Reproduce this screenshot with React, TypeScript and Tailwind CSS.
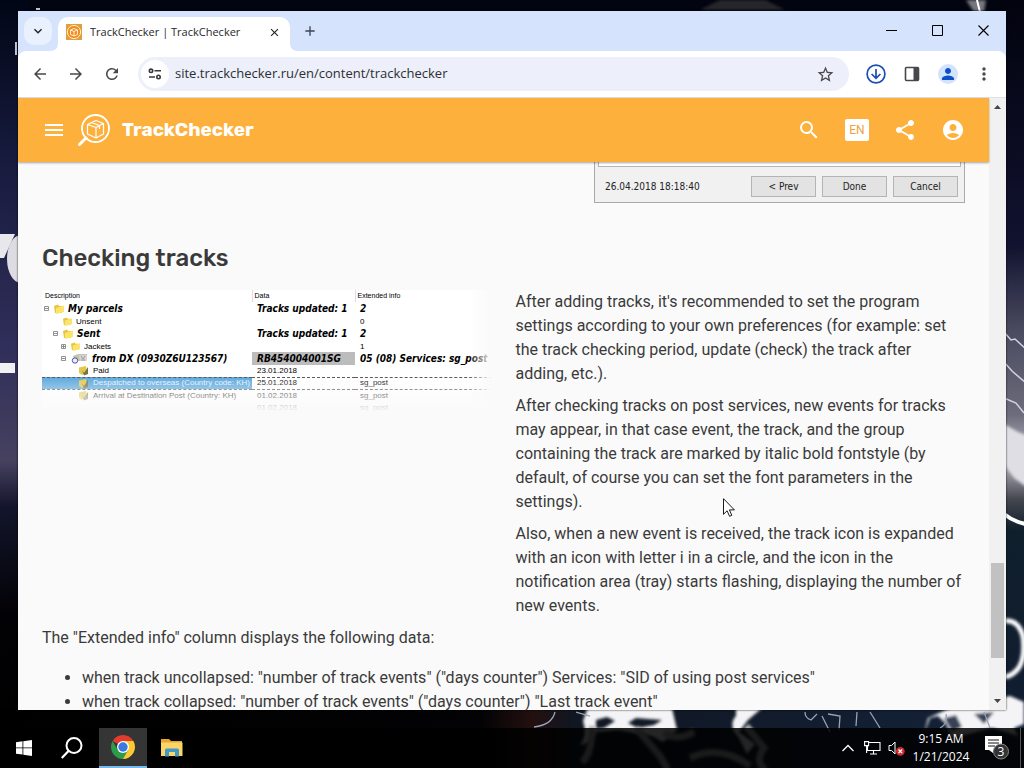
import React from "react";
import {
  MdAccountCircle,
  MdArrowBack,
  MdArrowForward,
  MdMenu,
  MdMoreVert,
  MdPerson,
  MdRefresh,
  MdSearch,
  MdShare,
  MdStarBorder,
  MdClose,
  MdAdd,
  MdExpandMore,
} from "react-icons/md";

function Wallpaper() {
  return (
    <svg
      aria-hidden="true"
      className="absolute inset-0 h-full w-full"
      viewBox="0 0 1024 768"
      preserveAspectRatio="none"
    >
      <defs>
        <linearGradient id="left" x1="0" y1="0" x2="0" y2="1">
          <stop offset="0" stopColor="#010616" />
          <stop offset="0.2" stopColor="#161a3c" />
          <stop offset="0.45" stopColor="#302e5a" />
          <stop offset="0.6" stopColor="#46415f" />
          <stop offset="0.66" stopColor="#13152c" />
          <stop offset="0.8" stopColor="#020205" />
          <stop offset="1" stopColor="#000000" />
        </linearGradient>
        <linearGradient id="right" x1="0" y1="0" x2="0" y2="1">
          <stop offset="0" stopColor="#02030e" />
          <stop offset="0.32" stopColor="#11122f" />
          <stop offset="0.43" stopColor="#4a4b60" />
          <stop offset="0.54" stopColor="#6d6c7c" />
          <stop offset="0.6" stopColor="#bdbdc8" />
          <stop offset="0.65" stopColor="#44474f" />
          <stop offset="0.69" stopColor="#101f2c" />
          <stop offset="0.95" stopColor="#101d31" />
          <stop offset="1" stopColor="#0a1322" />
        </linearGradient>
        <linearGradient id="foot" x1="0" y1="0" x2="1" y2="0">
          <stop offset="0" stopColor="#000000" />
          <stop offset="0.47" stopColor="#030305" />
          <stop offset="0.52" stopColor="#23100f" />
          <stop offset="0.56" stopColor="#101622" />
          <stop offset="1" stopColor="#14233a" />
        </linearGradient>
        <filter id="glow" filterUnits="userSpaceOnUse" x="0" y="0" width="1060" height="800">
          <feGaussianBlur stdDeviation="1.500" />
        </filter>
      </defs>
      <rect width="1024" height="768" fill="#02040f" />
      <rect width="30" height="768" fill="url(#left)" />
      <rect x="1000" width="24" height="768" fill="url(#right)" />
      <rect y="708" width="1024" height="60" fill="url(#foot)" />
      <path d="M700 10l20-10h45l20 10z" fill="#28252a" filter="url(#glow)" />
      <path d="M966 0h20l-2 12h-10z" fill="#77777f" filter="url(#glow)" />
      <path d="M977 0l3 12" stroke="#fff" strokeWidth="2" />
      <path d="M36 8h4v2h-4zM15 42h2v13h-2z" fill="#c5c7d0" />
      <path d="M0 234h15l-11 24H0z" fill="#e8e8ec" />
      <ellipse cx="21" cy="259" rx="14" ry="24" fill="#dcdce2" />
      <rect x="0" y="363" width="15" height="10" fill="#f0eff2" />
      <g fill="none" stroke="#fff">
        <path d="M1004 332l7 8 4-1 11 10M1004 362l8 9 14 12M1004 398l12 5 8 10" stroke="#cfd2e0" strokeWidth="1.500" />
        <path d="M1004 424l14 8 10 4v52l-14-10-10-14z" fill="#dedee4" stroke="none" filter="url(#glow)" />
        <path d="M1004 514q10 8 22 10" strokeWidth="4" />
        <path d="M1004 621q14-2 19 15 3 24-6 34-8 8-13 6" strokeWidth="5" filter="url(#glow)" />
      </g>
      <g filter="url(#glow)">
        <path
          fillRule="evenodd"
          fill="#f4f4f6"
          d="M589 704h82l6 26-14 12-11-6-34-6-22 2q-5 12-16 13 8-10 3-24zM596 720v9l8-1 11-7-8-4zM628 723l10 5 16-3 8-5-14-1-12-1z"
        />
        <path d="M736 708h26l-14 12-9 12 16 12-8 10-8-16-6-8q-2-10 3-14z" fill="#f4f4f6" />
        <path d="M924 734l4-16 22-10 60-12 14 6v22l-10 4 4 8-12-4-14-4-40 10-6-14-8-8-8 2z" fill="#f4f4f6" />
        <path d="M944 718l12-3 6 12-10 5z" fill="#384357" />
        <path d="M974 714l20-2-10 12z" fill="#384357" />
      </g>
      <path d="M534 727q18-2 21-15M590 716l-14-4M805 712q0 6 6 8l6-6M822 716l8 16M828 714l12 2-1 14M857 712l-1 14M870 712l10 16M940 728q8-4 6-14M984 712l6 16" stroke="#98a4b6" strokeWidth="1.300" fill="none" />
      <path d="M592 726q0 28-10 36M636 728l24 28 8 14M664 732q12 10 30 0M746 726l18 22q-10 14 2 22M690 758q30-14 60 8" stroke="#b0b0b0" strokeWidth="7" fill="none" filter="url(#glow)" />
    </svg>
  );
}

function BoxLens({ className }: { className: string }) {
  return (
    <svg aria-hidden="true" viewBox="0 0 34 34" className={className} fill="none" stroke="currentColor" strokeLinejoin="round">
      <circle cx="17.500" cy="15.500" r="13.500" strokeWidth="1.800" />
      <path d="M8 25l-6.500 6.500" strokeWidth="3" strokeLinecap="round" />
      <path d="M9.500 11.500l8.500-4 7.500 3v10.500l-7.500 4-8.500-4zM9.500 11.500l8.500 3 7.500-4M18 14.500V25M13.500 9.500l8 3v3.500" strokeWidth="1.200" />
    </svg>
  );
}

function Favicon() {
  return (
    <svg aria-hidden="true" viewBox="0 0 16 16" className="size-4">
      <rect width="16" height="16" fill="#dfa03c" />
      <circle cx="8" cy="8" r="6.600" fill="#f48b20" stroke="#fff0d0" />
      <path d="M4.500 6L8 4.500 11.500 6v4.500L8 12l-3.500-1.500zM4.500 6L8 7.500 11.500 6M8 7.500V12" fill="none" stroke="#fff0d0" />
    </svg>
  );
}

function TabStrip() {
  return (
    <div className="flex h-10 shrink-0 items-end">
      <button aria-label="Search tabs" className="mb-[6px] ml-[6px] flex size-7 items-center justify-center rounded-[10px] bg-[#e9f1fe] text-[#1f2023]">
        <MdExpandMore className="size-4" stroke="currentColor" />
      </button>
      <div className="relative ml-[6px] flex h-[34px] w-[232px] items-center rounded-t-[10px] bg-white pr-2 pb-[4px] pl-2">
        <svg aria-hidden="true" viewBox="0 0 8 8" className="absolute bottom-0 -left-2 size-2 text-white">
          <path d="M8 0v8H0q8 0 8-8" fill="currentColor" />
        </svg>
        <svg aria-hidden="true" viewBox="0 0 8 8" className="absolute -right-2 bottom-0 size-2 text-white">
          <path d="M0 0v8h8Q0 8 0 0" fill="currentColor" />
        </svg>
        <Favicon />
        <span className="ml-2 flex-1 truncate text-[11px] text-[#27282c]">TrackChecker | TrackChecker</span>
        <button aria-label="Close tab" className="flex size-4 items-center justify-center text-[#1f2023]">
          <MdClose className="size-[13px]" stroke="currentColor" />
        </button>
      </div>
      <button aria-label="New tab" className="mb-3 ml-3 flex size-4 items-center justify-center text-[#3c4454]">
        <MdAdd className="size-4" />
      </button>
      <div className="ml-auto flex h-[38px] self-start text-black">
        <button aria-label="Minimize" className="flex w-[46px] items-center justify-center">
          <svg viewBox="0 0 11 11" className="size-[11px]"><path d="M0 5.500h11" stroke="currentColor" /></svg>
        </button>
        <button aria-label="Maximize" className="flex w-[46px] items-center justify-center">
          <svg viewBox="0 0 11 11" className="size-[11px]"><path d="M.5.5h10v10H.5z" fill="none" stroke="currentColor" /></svg>
        </button>
        <button aria-label="Close" className="flex w-[46px] items-center justify-center">
          <svg viewBox="0 0 11 11" className="size-[11px]"><path d="M.5.5l10 10M10.500.5l-10 10" stroke="currentColor" strokeWidth="1.100" /></svg>
        </button>
      </div>
    </div>
  );
}

const toolButton = "flex h-9 w-9 items-center justify-center";

function AddressBar() {
  return (
    <div className="flex h-[47px] shrink-0 items-center rounded-t-lg border-b border-[#dfe1e6] bg-white px-1 text-[#46484c]">
      <button aria-label="Back" className={toolButton}><MdArrowBack className="size-[18px]" /></button>
      <button aria-label="Forward" className={toolButton}><MdArrowForward className="size-[18px]" /></button>
      <button aria-label="Reload" className={toolButton}><MdRefresh className="size-[18px]" /></button>
      <div className="mr-[9px] ml-2 flex h-[34px] flex-1 items-center rounded-full bg-[#edf0fa] pr-[14px] pl-[3px]">
        <button aria-label="Site information" className="flex size-7 items-center justify-center rounded-full bg-white text-[#36383c]">
          <svg viewBox="0 0 14 12" className="h-3 w-[14px]" fill="none" stroke="currentColor" strokeWidth="1.600">
            <circle cx="3" cy="2.800" r="1.700" />
            <path d="M6.500 2.800H13M1 9h6" />
            <circle cx="10.500" cy="9" r="1.700" />
          </svg>
        </button>
        <input
          aria-label="Address"
          readOnly
          value="site.trackchecker.ru/en/content/trackchecker"
          className="ml-[6px] min-w-0 flex-1 bg-transparent text-[13px] text-[#2c2e33] outline-none"
        />
        <button aria-label="Bookmark this page"><MdStarBorder className="size-[19px]" /></button>
      </div>
      <button aria-label="Downloads" className={toolButton}>
        <svg viewBox="0 0 20 20" className="size-5 text-[#1b4fb0]" fill="none" stroke="currentColor" strokeWidth="1.700">
          <circle cx="10" cy="10" r="8.900" />
          <path d="M10 5v9.300M5.600 10l4.400 4.400L14.400 10" />
        </svg>
      </button>
      <button aria-label="Side panel" className={toolButton}>
        <svg viewBox="0 0 16 16" className="size-4"><rect x="1.500" y="1.500" width="13" height="13" rx="1" fill="none" stroke="currentColor" strokeWidth="1.600" /><path d="M9.500 2h5v12h-5z" fill="currentColor" /></svg>
      </button>
      <button aria-label="Profile" className={toolButton}>
        <span className="flex size-5 items-center justify-center rounded-full bg-[#d3e3fd] text-[#0b50c8]"><MdPerson className="size-[18px]" /></span>
      </button>
      <button aria-label="Menu" className={toolButton}><MdMoreVert className="size-5" /></button>
    </div>
  );
}

function SiteHeader() {
  return (
    <header className="z-10 flex h-16 shrink-0 items-center bg-[#fdb03c] px-6 font-['Roboto',sans-serif] text-white shadow-[0_1px_2px_rgba(0,0,0,0.35)]">
      <button aria-label="Open menu"><MdMenu className="size-6" /></button>
      <a href="#top" className="ml-3 flex items-center">
        <BoxLens className="size-[34px]" />
        <span className="ml-[10px] font-['Rubik','Inter',sans-serif] text-[19px] font-bold">TrackChecker</span>
      </a>
      <div className="ml-auto flex items-center gap-6">
        <button aria-label="Search"><MdSearch className="size-6" /></button>
        <button className="flex h-[22px] w-6 items-center justify-center rounded-[2px] bg-white text-[12px] text-[#f0a23c]">EN</button>
        <button aria-label="Share"><MdShare className="size-6" /></button>
        <button aria-label="Account"><MdAccountCircle className="size-6" /></button>
      </div>
    </header>
  );
}

const dialogButton = "h-[21px] w-[65px] border border-[#b4b4b4] bg-[#e3e3e3] text-[10px] leading-[19px]";

function AddTrackDialog() {
  return (
    <div className="ml-auto w-[371px] border border-t-0 border-[#a9a9a9] bg-[#f1f1f1] px-[3px] font-['DejaVu_Sans_Condensed','DejaVu_Sans',sans-serif] text-[#222]">
      <div className="h-[5px] border border-t-0 border-[#b5b5b5] bg-white" />
      <div className="flex items-center gap-[6px] pt-[9px] pr-[3px] pb-[5px] pl-[7px]">
        <span className="mr-auto text-[10px] leading-[19px]">26.04.2018 18:18:40</span>
        <button className={dialogButton}>&lt; Prev</button>
        <button className={dialogButton}>Done</button>
        <button className={dialogButton}>Cancel</button>
      </div>
    </div>
  );
}

function Folder({ small }: { small?: boolean }) {
  return (
    <svg aria-hidden="true" viewBox="0 0 10 10" className={small ? "size-[9px] shrink-0" : "size-[10px] shrink-0"}>
      <path d="M0 2l4-1.500 1 1.500h3v7H1z" fill="#e9c43c" />
      <path d="M2 4L10 1.500V8L2 10z" fill="#fbe46c" />
    </svg>
  );
}

function TrackIcon() {
  return (
    <svg aria-hidden="true" viewBox="0 0 17 11" className="h-[11px] w-[17px] shrink-0">
      <path d="M2 3l5-2h9v7H4z" fill="#c9c4a8" />
      <path d="M8 2h8v6H9z" fill="#d4d4d4" />
      <path d="M10 3l2 3 2-3M10 7h4" stroke="#888" fill="none" strokeWidth=".7" />
      <circle cx="4" cy="7.500" r="2.700" fill="#eef" stroke="#4a4fa8" />
    </svg>
  );
}

function EventIcon() {
  return (
    <svg aria-hidden="true" viewBox="0 0 11 11" className="size-[11px] shrink-0">
      <path d="M1 2.500L8 1l1 6-5 3-3-2z" fill="#e2c84b" />
      <path d="M4 5l2 3 4-6v7l-4 1.500z" fill="#77714b" />
    </svg>
  );
}

function Toggle({ sign }: { sign: string }) {
  return (
    <svg aria-hidden="true" viewBox="0 0 5 5" className="mr-[5px] size-[5px] shrink-0" fill="none" stroke="#777" strokeWidth=".8">
      <path d={sign === "+" ? "M.5.5h4v4h-4zM1 2.500h3M2.500 1v3" : "M.5.5h4v4h-4zM1 2.500h3"} />
    </svg>
  );
}

type Row = {
  label: string;
  indent: string;
  sign?: string;
  icon: React.ReactNode;
  data: string;
  info: string;
  bold?: boolean;
  marked?: boolean;
  selected?: boolean;
};

const rows: Row[] = [
  { label: "My parcels", indent: "pl-[2px]", sign: "-", icon: <Folder />, data: "Tracks updated: 1", info: "2", bold: true },
  { label: "Unsent", indent: "pl-[21px]", icon: <Folder small />, data: "", info: "0" },
  { label: "Sent", indent: "pl-[11px]", sign: "-", icon: <Folder />, data: "Tracks updated: 1", info: "2", bold: true },
  { label: "Jackets", indent: "pl-[19px]", sign: "+", icon: <Folder small />, data: "", info: "1" },
  { label: "from DX (0930Z6U123567)", indent: "pl-[19px]", sign: "-", icon: <TrackIcon />, data: "RB454004001SG", info: "05 (08) Services: sg_post", bold: true, marked: true },
  { label: "Paid", indent: "pl-9", icon: <EventIcon />, data: "23.01.2018", info: "" },
  { label: "Despatched to overseas (Country code: KH)", indent: "pl-9", icon: <EventIcon />, data: "25.01.2018", info: "sg_post", selected: true },
  { label: "Arrival at Destination Post (Country: KH)", indent: "pl-9", icon: <EventIcon />, data: "01.02.2018", info: "sg_post" },
  { label: "", indent: "pl-9", icon: null, data: "01.02.2018", info: "sg_post" },
];

function TracksPicture() {
  return (
    <div className="relative h-[126px] overflow-hidden bg-white font-['Liberation_Sans',sans-serif] text-black">
      <table className="w-full table-fixed border-collapse text-left whitespace-nowrap">
        <colgroup>
          <col className="w-[210px]" />
          <col className="w-[103px]" />
          <col />
        </colgroup>
        <thead>
          <tr className="h-[12px] text-[7px] leading-[12px]">
            <th className="p-0 pl-[3px] font-normal">Description</th>
            <th className="border-l border-[#ddd] p-0 pl-[2px] font-normal">Data</th>
            <th className="border-l border-[#ddd] p-0 pl-[2px] font-normal">Extended info</th>
          </tr>
        </thead>
        <tbody>
          {rows.map((r, i) => (
            <tr
              key={i}
              className={
                r.bold
                  ? "h-[13px] font-['DejaVu_Sans_Condensed','DejaVu_Sans',sans-serif] text-[10px] leading-[12px] font-bold italic"
                  : r.selected
                    ? "h-[12px] border-y border-dashed border-[#555] text-[8px] leading-[10px]"
                    : "h-[12px] text-[8px] leading-[11px]"
              }
            >
              <td className={r.selected ? "bg-[#5aa7dc] p-0 text-[#e2f2fc]" : "p-0"}>
                <div className={"flex items-center overflow-hidden " + r.indent}>
                  {r.sign && <Toggle sign={r.sign} />}
                  {r.icon}
                  <span className="ml-1">{r.label}</span>
                </div>
              </td>
              <td className={r.marked ? "bg-[#bcbcbc] p-0 pl-[5px]" : "p-0 pl-[5px]"}>{r.data}</td>
              <td className="p-0 pl-[5px]">{r.info}</td>
            </tr>
          ))}
        </tbody>
      </table>
      <div className="absolute inset-x-0 bottom-0 h-10 bg-linear-to-b from-transparent to-[#fafafa] to-90%" />
      <div className="absolute inset-y-0 right-0 w-6 bg-linear-to-r from-transparent to-[#fafafa]" />
    </div>
  );
}

function Article() {
  return (
    <main className="min-h-0 flex-1 overflow-hidden bg-[#fafafa] px-6 font-['Roboto',sans-serif] text-[16px] leading-6 text-[#3a3a3a]">
      <AddTrackDialog />
      <h2 className="mt-[39px] mb-4 font-['Rubik','Inter',sans-serif] text-[24px] leading-8 font-medium text-[#3a3a3a]">Checking tracks</h2>
      <div className="grid grid-cols-2 items-start gap-6">
        <TracksPicture />
        <div className="space-y-2">
          <p>After adding tracks, it's recommended to set the program settings according to your own preferences (for example: set the track checking period, update (check) the track after adding, etc.).</p>
          <p>After checking tracks on post services, new events for tracks may appear, in that case event, the track, and the group containing the track are marked by italic bold fontstyle (by default, of course you can set the font parameters in the settings).</p>
          <p>Also, when a new event is received, the track icon is expanded with an icon with letter i in a circle, and the icon in the notification area (tray) starts flashing, displaying the number of new events.</p>
        </div>
      </div>
      <p className="mt-2">The "Extended info" column displays the following data:</p>
      <ul className="mt-4 list-disc pl-10">
        <li>when track uncollapsed: "number of track events" ("days counter") Services: "SID of using post services"</li>
        <li>when track collapsed: "number of track events" ("days counter") "Last track event"</li>
      </ul>
    </main>
  );
}

function Scrollbar() {
  return (
    <div aria-hidden="true" className="flex w-[17px] shrink-0 flex-col items-center bg-[#f1f1f1]">
      <svg viewBox="0 0 17 17" className="size-[17px] shrink-0"><path d="M5 11l3.500-4 3.500 4z" fill="#444" /></svg>
      <div className="grow-[448]" />
      <div className="w-[13px] grow-[95] bg-[#c1c1c1]" />
      <div className="grow-[35]" />
      <svg viewBox="0 0 17 17" className="size-[17px] shrink-0"><path d="M5 6l3.500 4L12 6z" fill="#444" /></svg>
    </div>
  );
}

function Taskbar() {
  return (
    <footer className="relative flex h-10 shrink-0 items-stretch bg-black/85 text-white">
      <button aria-label="Start" className="flex w-12 items-center justify-center">
        <svg viewBox="0 0 16 16" className="size-4" fill="currentColor"><path d="M0 2.200l6.500-.9v6.200H0zM7.300 1.200L16 0v7.500H7.300zM0 8.300h6.500v6.300L0 13.700zM7.300 8.300H16V16l-8.700-1.300z" /></svg>
      </button>
      <button aria-label="Search" className="flex w-12 items-center justify-center">
        <svg viewBox="0 0 22 22" className="size-[22px]" fill="none" stroke="currentColor" strokeWidth="2"><circle cx="13" cy="8.500" r="7.500" /><path d="M7.500 14L.8 21" strokeWidth="2.200" /></svg>
      </button>
      <button aria-label="Chrome" className="ml-[3px] flex w-12 items-center justify-center border-b-2 border-[#76b9ed] bg-[#353535]">
        <svg viewBox="0 0 24 24" className="size-6">
          <path d="M12 12L1.608 6A12 12 0 0 1 22.392 6z" fill="#e33b2e" />
          <path d="M12 24A12 12 0 0 0 22.392 6H12v6z" fill="#fcc934" />
          <path d="M1.608 6A12 12 0 0 0 12 24l5.200-9H6.800z" fill="#2c9c4b" />
          <circle cx="12" cy="12" r="6" fill="#fff" />
          <circle cx="12" cy="12" r="4.700" fill="#3b78e0" />
        </svg>
      </button>
      <button aria-label="File Explorer" className="ml-px flex w-12 items-center justify-center">
        <svg viewBox="0 0 22 18" className="h-[18px] w-[22px]"><path d="M0 0h8l2 2h11v4H0z" fill="#e7a92f" /><path d="M0 3.500h21.500V17H0z" fill="#fbd667" /><path d="M4 17.500V11q0-1.500 1.500-1.500h11Q18 9.500 18 11v6.500h-4V13H8v4.500z" fill="#4498c8" /></svg>
      </button>
      <div className="ml-auto flex items-center">
        <button aria-label="Show hidden icons" className="flex w-6 justify-center">
          <svg viewBox="0 0 12 8" className="h-2 w-3" fill="none" stroke="currentColor" strokeWidth="1.300"><path d="M.5 7L6 1.500 11.500 7" /></svg>
        </button>
        <button aria-label="Network" className="flex w-6 justify-center">
          <svg viewBox="0 0 17 14" className="h-[14px] w-[17px]" fill="none" stroke="currentColor" strokeWidth="1.100"><path d="M5 1.500h11v8H3.500V5M.6.6h4v4h-4zM9.500 9.500V13M6 13h7M2.600 4.600V12" /></svg>
        </button>
        <button aria-label="Volume muted" className="flex w-6 justify-center">
          <svg viewBox="0 0 17 15" className="h-[15px] w-[17px]" fill="none"><path d="M1 4.500h2.500L7 1v12L3.500 9.500H1z" stroke="currentColor" /><circle cx="12.300" cy="10.300" r="4.400" fill="#cf2a2e" /><path d="M10.500 8.500l3.600 3.600m0-3.600l-3.600 3.600" stroke="#fff" strokeWidth="1.300" /></svg>
        </button>
        <div className="w-[66px] text-center text-[12px] leading-[18px]">
          <div>9:15 AM</div>
          <div>1/21/2024</div>
        </div>
        <button aria-label="3 notifications" className="flex w-[46px] justify-center">
          <svg viewBox="0 0 24 25" className="h-[25px] w-6" aria-hidden="true">
            <path d="M0 0h17v14H8v3l-4-3H0z" fill="#fff" />
            <path d="M3 4h11M3 7h11M3 10h7" stroke="#111" />
            <circle cx="16" cy="15.500" r="7.500" fill="#333" stroke="#888" />
            <text x="16" y="20" textAnchor="middle" fontSize="12" fill="#fff">3</text>
          </svg>
        </button>
        <div className="h-full w-1 border-l border-[#555]" />
      </div>
    </footer>
  );
}

export default function App() {
  return (
    <div className="relative flex h-screen flex-col overflow-hidden bg-black font-['Open_Sans','Noto_Sans',sans-serif]">
      <Wallpaper />
      <div className="relative flex min-h-0 flex-1 flex-col px-[18px] pt-[11px] pb-[18px]">
        <section aria-label="Browser window" className="flex min-h-0 flex-1 flex-col overflow-hidden bg-[#d5e3fc] shadow-[0_0_2px_rgba(0,0,0,0.8)]">
          <TabStrip />
          <AddressBar />
          <div className="flex min-h-0 flex-1">
            <div className="flex min-w-0 flex-1 flex-col">
              <SiteHeader />
              <Article />
            </div>
            <Scrollbar />
          </div>
        </section>
      </div>
      <Taskbar />
      <svg aria-hidden="true" viewBox="0 0 12 19" className="pointer-events-none absolute top-[498px] left-[723px] h-[19px] w-3">
        <path d="M.5.7v15.600l3.600-3.500 2.500 5.500 2.200-1-2.400-5.400h5z" fill="#fff" stroke="#000" strokeWidth=".9" />
      </svg>
    </div>
  );
}
